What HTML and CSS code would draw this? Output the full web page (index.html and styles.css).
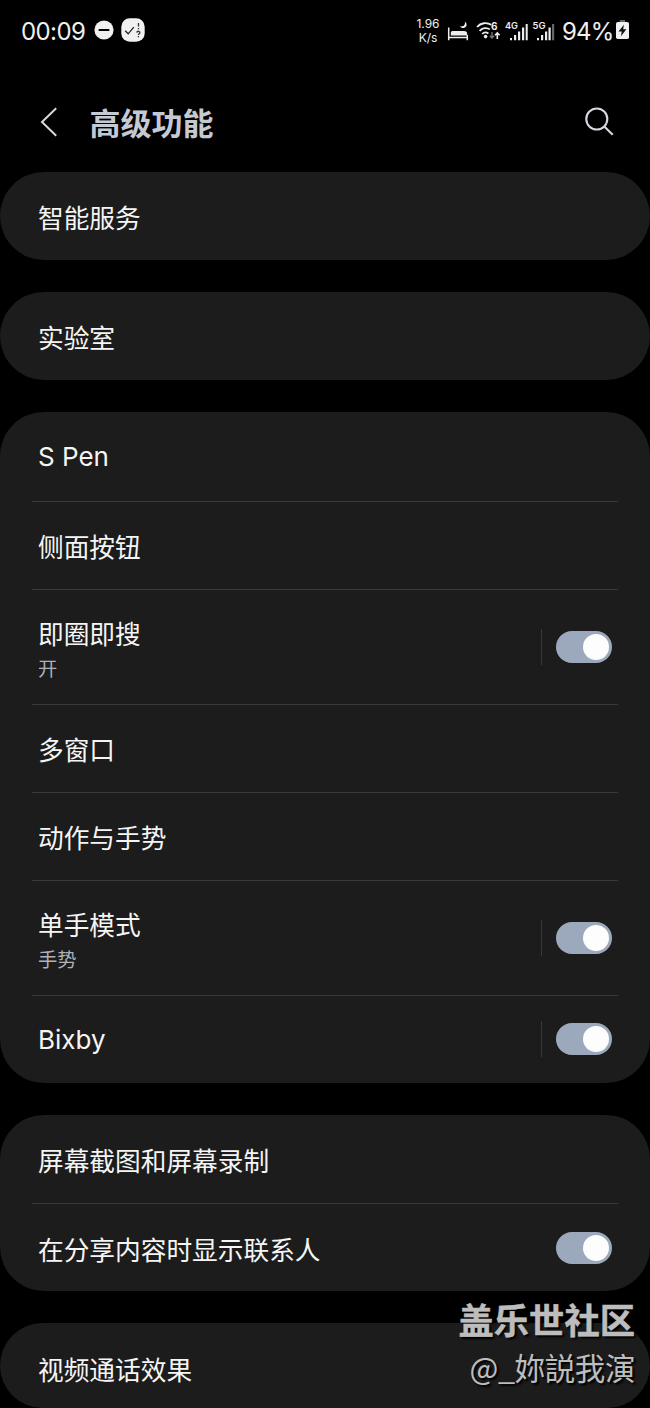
FILE: index.html
```html
<!DOCTYPE html>
<html lang="zh-CN">
<head>
<meta charset="utf-8">
<title>高级功能</title>
<link rel="stylesheet" href="styles.css">
</head>
<body>
<div class="screen">
  <header class="status">
    <span class="clock">00:09</span>
    <svg class="dnd" width="20" height="20" viewBox="0 0 20 20"><circle cx="10" cy="10" r="9.6" fill="#f1f1f1"/><path d="M5.5 10h9" stroke="#000" stroke-width="2.2" stroke-linecap="round"/></svg>
    <svg class="app" width="24" height="24" viewBox="0 0 24 24"><rect x=".3" y=".3" width="23.4" height="23.4" rx="8.5" fill="#f1f1f1"/><path d="M4.2 12.8l3 3 5.6-6.6" fill="none" stroke="#222" stroke-width="1.3"/><path d="M17.5 5v3.6M17.5 10v1.2M15.8 14.6c.2-2 3.4-1.6 3 .2-.2 1-1.4 1-1.4 2.1M17.4 18v1.2" fill="none" stroke="#333" stroke-width="1.3"/></svg>
    <span class="speed"><span>1.96</span><span>K/s</span></span>
    <svg class="signals" width="108" height="28" viewBox="0 0 108 28">
      <g fill="none" stroke="#eee" stroke-width="1.5"><path d="M1.7 9.5v12.8M1.7 19.6h18.6M20.3 22.3V17"/></g>
      <path d="M3.8 17.6v-3q0-1.6 1.6-1.6h11.6q3.2 0 3.2 3v1.6z" fill="#eee"/>
      <path d="M17.8 3.7c.9 2.9-1.2 5.3-4.9 4.6 2 3.2 7.4 1.8 6.6-2.2-.2-1.2-.8-2-1.7-2.4z" fill="#eee"/>
      <g fill="none" stroke="#eee" stroke-width="1.8"><path d="M30 9c3.7-4.3 9.8-5 14.2-2.2M32.6 12.8c2.7-3.1 7.3-3.6 10.2-1.4M35.2 16c1.7-1.8 4.2-2 6.2-.6"/></g>
      <circle cx="38.6" cy="18.6" r="1.8" fill="#eee"/>
      <text class="wifi-number" x="44" y="11.6">6</text>
      <path d="M45 14v6M42.9 17.8l2.1 2.2 2.1-2.2" stroke="#777" stroke-width="1.4" fill="none"/>
      <path d="M50.3 21v-6M48 17.2l2.3-2.4 2.3 2.4" stroke="#eee" stroke-width="1.6" fill="none"/>
      <text class="net" x="58" y="11.2" textLength="13" lengthAdjust="spacingAndGlyphs">4G</text><text class="net" x="85.5" y="11.2" textLength="13" lengthAdjust="spacingAndGlyphs">5G</text>
      <g fill="#eee"><path d="M63 20h2v2.3h-2zM67 17h2.2v5.3H67zM71 13.4h2.2v8.9H71zM75 9.6h2.2v12.7H75zM78.7 6h2v16.3h-2z"/><path d="M90 20h2v2.3h-2zM94 17h2.2v5.3H94zM98 13.4h2.2v8.9H98zM101.5 9.6h2.2v12.7h-2.2z"/></g>
      <path d="M105 6h2.2v16.3H105z" fill="#666"/>
    </svg>
    <span class="percent">94%</span>
    <svg class="battery" width="13" height="20" viewBox="0 0 13 20"><path d="M3.8 0h5.4v2.5H3.8z" fill="#666"/><rect y="2" width="13" height="17" rx="1.8" fill="#f1f1f1"/><path d="M7.9 4.7L2.5 11.4h3.3l-.9 4.8 5.5-7H7.2z" fill="#111"/></svg>
  </header>

  <div class="titlebar">
    <svg class="back" width="18" height="30" viewBox="0 0 18 30"><path d="M16.2 1.3L2 15l14.2 13.7" fill="none" stroke="#d5d8df" stroke-width="2"/></svg>
    <h1>高级功能</h1>
    <svg class="search" width="30" height="30" viewBox="0 0 30 30"><g fill="none" stroke="#d5d8df" stroke-width="2.1"><circle cx="12.8" cy="12" r="10.5"/><path d="M20.3 19.5l8.4 8.3"/></g></svg>
  </div>

  <main>
    <section class="card single"><div class="row"><span class="label">智能服务</span></div></section>
    <section class="card single"><div class="row"><span class="label">实验室</span></div></section>
    <section class="card">
      <div class="row first"><span class="label latin">S Pen</span></div>
      <div class="row"><span class="label">侧面按钮</span></div>
      <div class="row tall"><div class="texts"><span class="label">即圈即搜</span><span class="sub">开</span></div><i class="bar"></i><i class="toggle"></i></div>
      <div class="row"><span class="label">多窗口</span></div>
      <div class="row"><span class="label">动作与手势</span></div>
      <div class="row tall"><div class="texts"><span class="label">单手模式</span><span class="sub">手势</span></div><i class="bar"></i><i class="toggle"></i></div>
      <div class="row"><span class="label latin">Bixby</span><i class="bar"></i><i class="toggle"></i></div>
    </section>
    <section class="card share">
      <div class="row"><span class="label">屏幕截图和屏幕录制</span></div>
      <div class="row"><span class="label">在分享内容时显示联系人</span><i class="toggle"></i></div>
    </section>
    <section class="card last"><div class="row"><span class="label">视频通话效果</span></div></section>
  </main>

  <div class="watermark"><strong>盖乐世社区</strong><span>@_妳説我演</span></div>
</div>
</body>
</html>
```

FILE: styles.css
```css
* { box-sizing: border-box; }
body { margin: 0; background: #000; }
svg { display: block; flex: none; }
.screen {
  position: relative;
  width: 650px;
  height: 1408px;
  overflow: hidden;
  background: #000;
  color: #f5f5f5;
  font-family: Inter, "Noto Sans CJK SC", sans-serif;
}
.status {
  display: flex;
  align-items: center;
  height: 60px;
  padding: 0 20px 0 21px;
  color: #efefef;
}
.clock { width: 65px; font-size: 24px; letter-spacing: -.6px; margin-top: 2px; white-space: nowrap; }
.dnd { margin-left: 8px; }
.app { margin-left: 7px; }
.speed {
  display: flex;
  flex-direction: column;
  align-items: center;
  width: 26px;
  margin-left: 270px;
  margin-top: 1px;
  font-size: 12px;
  line-height: 14px;
}
.signals { margin-left: 6px; margin-top: 4px; }
.wifi-number { font: 700 10px Inter, sans-serif; fill: #eee; }
.net { font: 600 9.5px Inter, sans-serif; fill: #eee; }
.percent { width: 51px; margin-left: 7px; margin-top: 2px; font-size: 24px; letter-spacing: -.8px; white-space: nowrap; }
.battery { margin-left: 3px; }
.titlebar {
  display: flex;
  align-items: center;
  height: 112px;
  padding: 0 36px 12px 40px;
}
.back { margin-top: 23px; }
.search { margin-left: auto; margin-top: 23px; }
h1 {
  margin: 28px 0 0 31.5px;
  font-size: 31px;
  line-height: 40px;
  font-weight: 600;
  color: #c5c9d4;
}
main { display: flex; flex-direction: column; gap: 32px; }
.card {
  border-radius: 44px;
  background: #1c1c1c;
  padding: 0 32px;
}
.row {
  display: flex;
  align-items: center;
  height: 88.25px;
  padding: 0 6px;
}
.single .row { height: 88px; }
.row.first { height: 88.75px; }
.row + .row { border-top: 1.5px solid #393939; }
.row.tall { height: 114.5px; }
.last .row { height: 84.5px; padding-top: 5px; }
.label { font-size: 25.7px; line-height: 38px; margin-top: 5px; white-space: nowrap; }
.share .label { margin-top: 7px; }
.label.latin { font-size: 26px; margin-top: 2px; }
.texts { display: flex; flex-direction: column; margin-top: 3px; }
.texts .label { margin-top: 2px; }
.sub { font-size: 19.3px; line-height: 28px; margin-top: 1px; color: #aeb0b8; }
.bar { width: 1.5px; height: 36px; margin-left: auto; margin-right: 14px; background: #383838; }
.toggle {
  display: flex;
  justify-content: flex-end;
  width: 56px;
  height: 32px;
  padding: 3px;
  border-radius: 16px;
  background: #9ca9bc;
}
.label + .toggle { margin-left: auto; }
.toggle::after { content: ""; width: 26px; height: 26px; border-radius: 50%; background: #fdfdfd; }
.watermark {
  position: absolute;
  right: 15px;
  top: 1299px;
  display: flex;
  flex-direction: column;
  align-items: flex-end;
  color: #bdbdbd;
  text-shadow: 2px 2px 2px #000;
  white-space: nowrap;
}
.watermark strong { font-size: 35.3px; line-height: 46px; font-weight: 700; -webkit-text-stroke: .5px #bdbdbd; }
.watermark span { font-family: "Noto Sans CJK SC", sans-serif; font-size: 30.5px; line-height: 44px; letter-spacing: -.4px; }
```
